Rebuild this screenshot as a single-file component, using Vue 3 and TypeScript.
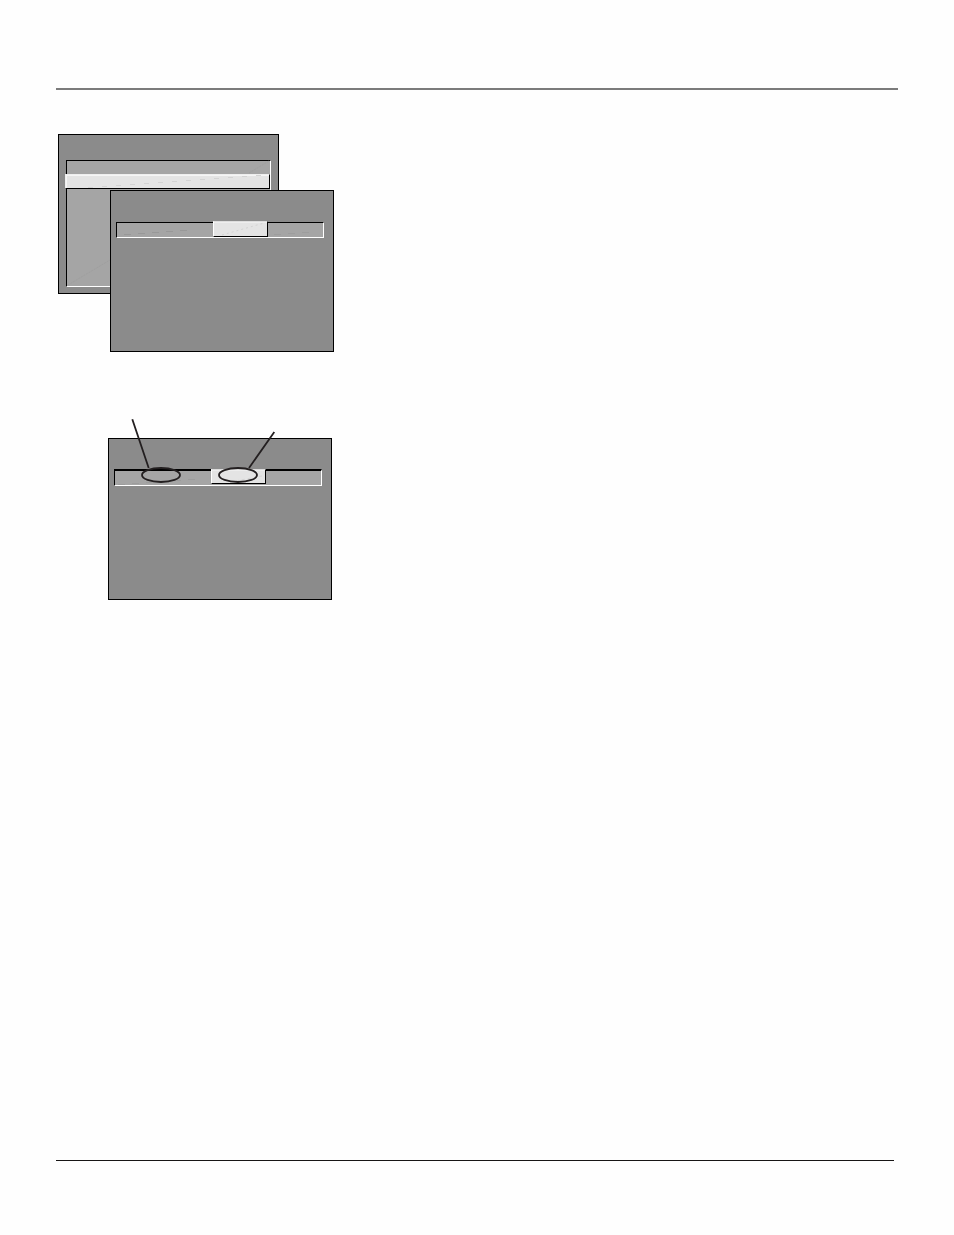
<script setup lang="ts">
interface Dash {
  x: number
  y: number
}

function trail(x: number, y: number, stepX: number, stepY: number, count: number): Dash[] {
  return Array.from({ length: count }, (_, i) => ({ x: x + i * stepX, y: y + i * stepY }))
}

const menuTrail = trail(30, 54, 14, -1, 13)
const rowTrail = trail(66, 101, 14, -1, 5)
const rowEndTrail = trail(216, 91, 14, -1, 3)
const calloutTrail = trail(10, 67, 14, -1, 6)
</script>

<template>
  <main class="page">
    <hr class="rule rule-top" />

    <section class="stack">
      <div class="panel panel-back">
        <div class="list">
          <div class="list-row"></div>
          <div class="selected"></div>
        </div>
      </div>
      <div class="panel panel-front">
        <div class="bar">
          <div class="choice"></div>
        </div>
      </div>
      <svg class="overlay" width="276" height="218" viewBox="0 0 276 218" aria-hidden="true">
        <g stroke="#d3d3d3">
          <path v-for="d in menuTrail" :key="d.x" :d="`M${d.x} ${d.y - 0.5}h5`" />
          <path d="M164 101L206 89" stroke-dasharray="2 3" />
        </g>
        <g stroke="#989898">
          <path v-for="d in rowTrail" :key="d.x" :d="`M${d.x} ${d.y - 0.5}h7`" />
          <path v-for="d in rowEndTrail" :key="d.x" :d="`M${d.x} ${d.y + 9.5}h7`" stroke="#9d9d9d" />
          <path d="M191 39L211 27M10 151L52 126" stroke-dasharray="2 1" stroke="#9f9f9f" />
        </g>
      </svg>
    </section>

    <section class="callout">
      <div class="panel">
        <div class="bar bar-heavy">
          <div class="choice"></div>
        </div>
      </div>
      <svg class="overlay" width="224" height="182" viewBox="0 0 224 182" aria-hidden="true">
        <g stroke="#9c9c9c">
          <path v-for="d in calloutTrail" :key="d.x" :d="`M${d.x} ${d.y - 0.5}h7`" />
          <path d="M122 64L154 58" stroke="#d5d5d5" stroke-dasharray="3 3" />
        </g>
        <g fill="none" stroke="#231f20" stroke-width="1.8">
          <ellipse cx="53" cy="57" rx="19" ry="7" />
          <ellipse cx="130" cy="57" rx="19" ry="7" />
          <path d="M24.3 1.3L40.7 50M166.3 14L141 50" />
        </g>
      </svg>
    </section>

    <hr class="rule rule-bottom" />
  </main>
</template>

<style>
body {
  margin: 0;
  background: #fefefe;
}
</style>

<style scoped>
.page {
  box-sizing: border-box;
  display: flex;
  flex-direction: column;
  min-height: 100vh;
  padding: 88px 56px 74px;
  font-family: "Liberation Sans", Arial, sans-serif;
}

.page * {
  box-sizing: border-box;
}

.rule {
  align-self: stretch;
  margin: 0;
  border: 0;
}

.rule-top {
  height: 2px;
  background: #7b7b7b;
}

.rule-bottom {
  height: 1px;
  margin-top: auto;
  margin-right: 4px;
  background: #171515;
}

.stack {
  position: relative;
  width: 276px;
  height: 218px;
  margin: 44px 0 0 2px;
}

.panel {
  width: 224px;
  height: 162px;
  padding: 31px 9px 0 5px;
  border: 1px solid #000;
  background: #8b8b8b;
}

.panel-back {
  width: 221px;
  height: 160px;
  padding: 25px 7px 6px;
}

.panel-front {
  position: absolute;
  right: 0;
  bottom: 0;
}

.list {
  height: 127px;
  border: 1px solid;
  border-color: #000 #fff #fff #000;
  background: #a5a5a5;
}

.list-row {
  height: 13px;
}

.selected {
  height: 15px;
  margin-left: -2px;
  border: 1px solid;
  border-color: #eee #000 #000 #eee;
  background: #e4e4e4;
  box-shadow: inset 1px 1px #f5f5f5;
}

.bar {
  display: flex;
  height: 16px;
  border: 1px solid;
  border-color: #000 #fff #fff #000;
  background: #a5a5a5;
}

.choice {
  width: 55px;
  height: 16px;
  margin: -2px 0 0 96px;
  border: 1px solid;
  border-color: #ddd #000 #000 #fff;
  background: #e4e4e4;
  box-shadow: inset 0 1px #eee;
}

.callout {
  position: relative;
  width: 224px;
  margin: 66px 0 0 52px;
  padding-top: 20px;
}

.callout .panel {
  padding-top: 30px;
}

.bar-heavy {
  height: 17px;
  border-top-width: 2px;
}

.bar-heavy .choice {
  height: 15px;
}

.overlay {
  position: absolute;
  inset: 0;
}
</style>
